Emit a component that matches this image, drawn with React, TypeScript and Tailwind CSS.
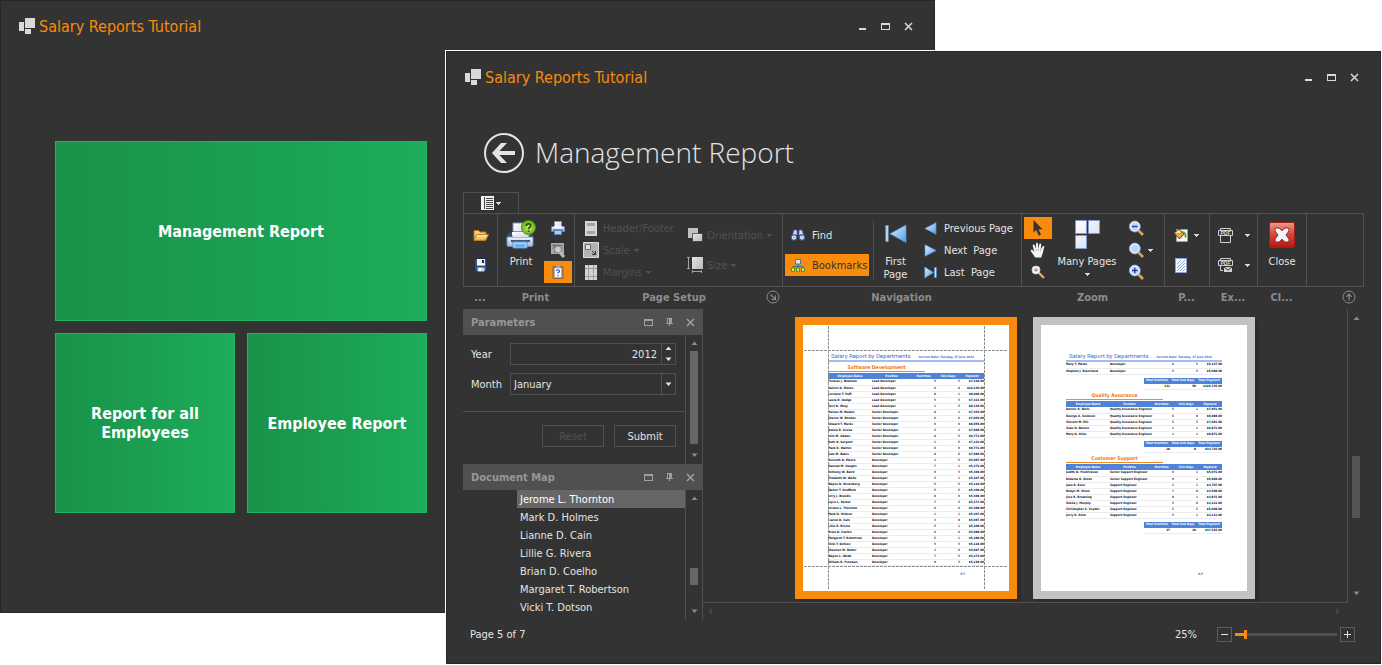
import type { ReactNode } from 'react';

/* ---------- small glyphs ---------- */

function Down({ className = 'fill-[#d8d8d8]' }: { className?: string }) {
  return (
    <svg width="5" height="3" viewBox="0 0 5 3" className={'shrink-0 ' + className} shapeRendering="crispEdges">
      <path d="M0 0h5v1H0zM1 1h3v1H1zM2 2h1v1H2z" />
    </svg>
  );
}

function Arrow({ dir, className }: { dir: 'up' | 'down' | 'left' | 'right'; className: string }) {
  const d = {
    up: 'M0.5 5L3.5 1.500L6.500 5Z',
    down: 'M0.5 1.500L3.5 5L6.500 1.500Z',
    left: 'M5 0L1 3.5L5 7Z',
    right: 'M1 0L5 3.5L1 7Z',
  }[dir];
  return (
    <svg width="7" height="7" viewBox="0 0 7 7" className={'shrink-0 ' + className}>
      <path d={d} />
    </svg>
  );
}

function AppLogo() {
  return (
    <svg width="16" height="16" viewBox="0 0 16 16" className="fill-[#d9d9d9]" shapeRendering="crispEdges">
      <path d="M0 4h5v9H0zM6 0h10v10H6zM6 11h6v5H6z" />
    </svg>
  );
}

/* ---------- ribbon icons ---------- */

function Gradients() {
  return (
    <svg width="0" height="0" className="absolute" aria-hidden="true">
      <defs>
        <linearGradient id="sky" x1="0" y1="0" x2="1" y2="1">
          <stop offset="0" stopColor="#e6f3fd" />
          <stop offset="1" stopColor="#4f9be0" />
        </linearGradient>
        <linearGradient id="paper" x1="0" y1="0" x2="1" y2="1">
          <stop offset="0" stopColor="#ffffff" />
          <stop offset="1" stopColor="#ccd9f0" />
        </linearGradient>
        <linearGradient id="body" x1="0" y1="0" x2="0" y2="1">
          <stop offset="0" stopColor="#f4f7fd" />
          <stop offset="1" stopColor="#9fb3dd" />
        </linearGradient>
        <linearGradient id="gold" x1="0" y1="0" x2="0" y2="1">
          <stop offset="0" stopColor="#fff0b8" />
          <stop offset="1" stopColor="#e7a33a" />
        </linearGradient>
        <linearGradient id="red" x1="0" y1="0" x2="0" y2="1">
          <stop offset="0" stopColor="#ee9a8b" />
          <stop offset="0.45" stopColor="#d9493c" />
          <stop offset="1" stopColor="#b5160f" />
        </linearGradient>
        <linearGradient id="grey" x1="0" y1="0" x2="1" y2="1">
          <stop offset="0" stopColor="#e6e6e6" />
          <stop offset="1" stopColor="#b8b8b8" />
        </linearGradient>
        <radialGradient id="green">
          <stop offset="0" stopColor="#c3ee5a" />
          <stop offset="1" stopColor="#6db51a" />
        </radialGradient>
      </defs>
    </svg>
  );
}

function FolderIcon() {
  return (
    <svg width="16" height="14" viewBox="0 0 16 14">
      <path d="M1 12V2.5h4.5L7 4h6v3" fill="#f6cf78" stroke="#b9711c" />
      <path d="M1 12.5L3.8 6.5H15.5L12.5 12.5Z" fill="url(#gold)" stroke="#c47b1e" />
    </svg>
  );
}

function SaveIcon() {
  return (
    <svg width="14" height="15" viewBox="0 0 14 15">
      <path d="M.5.5h12.500v13H2l-1.500-1.500z" fill="#3d5076" stroke="#1f2a44" />
      <path d="M3 1h8v6H3z" fill="url(#paper)" />
      <path d="M3.500 9.500h7v4h-7z" fill="#b9dcf7" />
      <path d="M3 5.500h8v2H3z" fill="#fff" />
      <path d="M8 2h2v3H8z" fill="#1f2a44" />
      <path d="M5 10h2v3H5z" fill="#fff" />
    </svg>
  );
}

function PrintLargeIcon() {
  return (
    <svg width="30" height="30" viewBox="0 0 30 30">
      <path d="M7 3h13v11H7z" fill="url(#paper)" stroke="#8297c4" />
      <path d="M4 12h20l3 3v4H1v-4z" fill="#3c4d70" stroke="#2b3857" />
      <path d="M1 17h26v8c0 1-1 1.500-2 1.500H3c-1 0-2-.5-2-1.500z" fill="url(#body)" stroke="#7488b8" />
      <path d="M6 12h17v3c0 1.500-1 2-2 2H8c-1 0-2-.5-2-2z" fill="url(#paper)" />
      <path d="M5 20h19v2H5z" fill="#46577d" />
      <path d="M7 22h14v6H7z" fill="#a9d8f8" stroke="#6a93c9" />
      <path d="M9 24h10v3H9z" fill="#5eb5ec" />
      <circle cx="22.500" cy="7.500" r="7" fill="url(#green)" stroke="#4e8c12" />
      <path d="M20.200 6c0-3 4.600-3 4.600-.4 0 1.800-2.200 1.800-2.200 3.400M22.600 10.500v1.500" fill="none" stroke="#2b430c" strokeWidth="1.600" />
    </svg>
  );
}

function PrintSmallIcon() {
  return (
    <svg width="14" height="14" viewBox="0 0 14 14">
      <path d="M3.500.5h7v6h-7z" fill="url(#paper)" stroke="#7e94c6" />
      <path d="M.5 5.500h13v5H.5z" fill="url(#body)" stroke="#6d82b6" />
      <path d="M3 5h8v2.500H3z" fill="#f4f8ff" />
      <path d="M2 8.500h10v1H2z" fill="#33446e" />
      <path d="M3.500 9.500h7v4h-7z" fill="#9ed0f6" stroke="#5c86c2" />
    </svg>
  );
}

function PageMagnifyIcon() {
  return (
    <svg width="14" height="15" viewBox="0 0 14 15">
      <path d="M0 0h13v11H0z" fill="#a9a9a9" />
      <path d="M1 2.500h11M1 5h11M3.500 1v9M7 1v3" stroke="#6b6b6b" />
      <circle cx="7" cy="6.500" r="3.500" fill="#c9c9c9" stroke="#8b8b8b" />
      <path d="M9 9.500l4 4.500" stroke="#bdbdbd" strokeWidth="3" />
    </svg>
  );
}

function ClipboardIcon() {
  return (
    <svg width="12" height="14" viewBox="0 0 12 14">
      <path d="M1 1.500h10v12H1z" fill="#b98e56" stroke="#8c6434" />
      <path d="M2.500 3h7v9.500h-7z" fill="#f5f8ff" stroke="#8fa3cb" strokeWidth=".6" />
      <path d="M4 0h4v3H4z" fill="#8fa6d4" />
      <path d="M4.500 6c0-1.700 3-1.700 3 0 0 1.200-1.500 1.200-1.500 2.500M6 10v1.300" fill="none" stroke="#2a57a4" strokeWidth="1.200" />
    </svg>
  );
}

function HeaderFooterIcon() {
  return (
    <svg width="12" height="15" viewBox="0 0 12 15">
      <path d="M0 0h12v15H0z" fill="#d6d6d6" />
      <path d="M2 2h8v3H2zM2 10h8v3H2z" fill="#a4a4a4" />
    </svg>
  );
}

function ScaleIcon() {
  return (
    <svg width="16" height="16" viewBox="0 0 16 16">
      <path d="M.5.500h15v15H.5z" fill="#b3b3b3" stroke="#dcdcdc" />
      <path d="M2.500 2.500h5v5h-5z" fill="#e0e0e0" stroke="#6d6d6d" />
      <path d="M9 9l3.500 3.500M12.500 9v3.500H9" stroke="#333" fill="none" />
    </svg>
  );
}

function MarginsIcon() {
  return (
    <svg width="12" height="15" viewBox="0 0 12 15">
      <path d="M0 0h12v15H0z" fill="#d4d4d4" />
      <path d="M3.500 0v15M8.500 0v15M0 3.500h12M0 11.500h12" stroke="#9c9c9c" />
    </svg>
  );
}

function OrientationIcon() {
  return (
    <svg width="15" height="14" viewBox="0 0 15 14">
      <path d="M0 0h10v10H0z" fill="#c2c2c2" />
      <path d="M4.500 5.500h10v8h-10z" fill="url(#grey)" stroke="#333" strokeWidth=".7" />
    </svg>
  );
}

function SizeIcon() {
  return (
    <svg width="16" height="16" viewBox="0 0 16 16">
      <path d="M5 0h11v12H5z" fill="url(#grey)" />
      <path d="M1.500 0v12M0 .5h3M0 11.500h3M5 14.500h10M5.500 13v3M14.500 13v3" stroke="#a4a4a4" fill="none" />
    </svg>
  );
}

function FindIcon() {
  return (
    <svg width="14" height="12" viewBox="0 0 14 12">
      <path d="M3 1h3v5H1.500zM8 1h3l1.500 5H8z" fill="#cfdcf8" stroke="#5266a4" strokeWidth=".8" />
      <path d="M6 4h2v2H6z" fill="#42568f" />
      <circle cx="3" cy="8.500" r="2.600" fill="#fff" stroke="#4960a5" strokeWidth="1.300" />
      <circle cx="11" cy="8.500" r="2.600" fill="#fff" stroke="#4960a5" strokeWidth="1.300" />
      <circle cx="3" cy="8.500" r="1" fill="#8ca5dd" />
      <circle cx="11" cy="8.500" r="1" fill="#8ca5dd" />
    </svg>
  );
}

function BookmarksIcon() {
  return (
    <svg width="14" height="13" viewBox="0 0 14 13">
      <path d="M7 5v5M2 10V7.500h10V10" fill="none" stroke="#4d6688" />
      <path d="M4.500.5h5v4.500h-5z" fill="#d3ecff" stroke="#3b78b8" />
      <path d="M.5 9h3v3.300h-3zM5.500 9h3v3.300h-3zM10.500 9h3v3.300h-3z" fill="#d9f08a" stroke="#5c8c14" />
    </svg>
  );
}

function FirstPageIcon() {
  return (
    <svg width="22" height="20" viewBox="0 0 22 20">
      <path d="M.8 1.500h2.400v16H.8z" fill="#cfe6f9" stroke="#5c9edb" strokeWidth=".8" />
      <path d="M21 1v17.500L5 9.800Z" fill="url(#sky)" stroke="#4d94d8" strokeWidth=".8" />
    </svg>
  );
}

function NavIcon({ kind }: { kind: 'prev' | 'next' | 'last' }) {
  return (
    <svg width="13" height="13" viewBox="0 0 13 13">
      {kind === 'prev' && <path d="M12 .7v11.600L.8 6.500Z" fill="url(#sky)" stroke="#4d94d8" strokeWidth=".7" />}
      {kind === 'next' && <path d="M1 .7v11.600L12.200 6.500Z" fill="url(#sky)" stroke="#4d94d8" strokeWidth=".7" />}
      {kind === 'last' && (
        <>
          <path d="M.8 1v11L9.500 6.500Z" fill="url(#sky)" stroke="#4d94d8" strokeWidth=".7" />
          <path d="M10.500 1.500h1.800v10h-1.800z" fill="#d8ebfb" stroke="#5c9edb" strokeWidth=".7" />
        </>
      )}
    </svg>
  );
}

function PointerIcon() {
  return (
    <svg width="10" height="17" viewBox="0 0 10 17" className="fill-[#333]">
      <path d="M.5 0v12.500L3.300 10l2.400 5.800 2.300-1L5.600 9.200H9.500Z" />
    </svg>
  );
}

function HandIcon() {
  return (
    <svg width="16" height="16" viewBox="0 0 16 16">
      <path
        d="M5 15.500C4 13 1 10 .7 8.800.4 7.600 2 7.300 2.800 8.300L4.300 10 2.800 4c-.3-1.500 1.500-2 2-.5L6 7 6 1.800c0-1.500 1.900-1.500 2 0L8.300 7l1-4.700c.3-1.400 2.100-1 1.900.4L10.700 7.500l1.800-3c.7-1.200 2.200-.4 1.700.8C13.500 7.500 13.300 9 12.800 11c-.3 1.500-1.200 2.500-1.400 4.500Z"
        fill="#f3f3f3"
      />
      <path d="M6.200 7v2M8.400 7v2M10.500 7.500v2" stroke="#aaa" strokeWidth=".7" />
    </svg>
  );
}

function LoupeIcon() {
  return (
    <svg width="14" height="14" viewBox="0 0 14 14">
      <path d="M8 8l5 5" stroke="#e8ab57" strokeWidth="2.400" />
      <circle cx="5" cy="5" r="4" fill="#eef4fb" stroke="#c7d3e6" />
      <circle cx="5" cy="5" r="1.200" fill="#fff" stroke="#c0392b" strokeWidth=".8" />
    </svg>
  );
}

function ZoomIcon({ sign }: { sign?: '+' | '-' }) {
  return (
    <svg width="16" height="16" viewBox="0 0 16 16">
      <path d="M10.500 10.500l4.500 4.500" stroke="#e3a04a" strokeWidth="2.600" />
      <circle cx="6.800" cy="6.500" r="5.500" fill="#bcd4f6" stroke="#6f92d4" strokeWidth="1" />
      <circle cx="6.800" cy="6.500" r="4.400" fill="none" stroke="#eaf2ff" strokeWidth="1.200" />
      {sign && <path d="M4 6.500h5.600" stroke="#1f3c86" strokeWidth="1.400" />}
      {sign === '+' && <path d="M6.800 3.700v5.600" stroke="#1f3c86" strokeWidth="1.400" />}
    </svg>
  );
}

function ManyPagesIcon() {
  return (
    <svg width="25" height="29" viewBox="0 0 25 29">
      <path d="M.5.5h11v13H.5zM13.500.5h11v13h-11zM.5 15.500h11v13H.5z" fill="url(#paper)" stroke="#8198cc" />
    </svg>
  );
}

function PageColorIcon() {
  return (
    <svg width="15" height="14" viewBox="0 0 15 14">
      <path d="M3.500 1.500h11v12h-11z" fill="#f3f7ff" stroke="#86a0d6" />
      <path d="M1 5l5-4 5 5-4.500 5z" fill="#e9a13d" stroke="#6f4412" />
      <path d="M2.500 5L6 2.200 8 4.500z" fill="#fff1c9" />
      <path d="M8 4.500c3-1 5 1 4.500 5" fill="none" stroke="#5ba21e" strokeWidth="1.800" />
    </svg>
  );
}

function WatermarkIcon() {
  return (
    <svg width="12" height="15" viewBox="0 0 12 15">
      <path d="M.5.5h11v14H.5z" fill="#f6f9ff" stroke="#8aa2d8" />
      <path d="M2 6l4-4M2 10l8-8M2 13l8-8M5 13l5-5M8 13l2-2" stroke="#8fa9e0" strokeWidth="1" />
    </svg>
  );
}

function PdfIcon({ mail }: { mail?: boolean }) {
  return (
    <svg width="15" height="15" viewBox="0 0 15 15">
      <path d="M2.500 3V.5h10V3" fill="none" stroke="#d0d0d0" />
      <path d="M.5 2.500h14v5H.5z" fill="#333" stroke="#d0d0d0" />
      <text x="7.500" y="7" textAnchor="middle" className="fill-[#d8d8d8] font-['Liberation_Sans'] text-[5px] font-bold">
        PDF
      </text>
      {mail ? (
        <>
          <path d="M2.500 8v4.500H5" fill="none" stroke="#d0d0d0" />
          <path d="M6 9h8v5H6z" fill="#d0d0d0" />
          <path d="M6 9l4 3 4-3" fill="none" stroke="#333" />
        </>
      ) : (
        <path d="M2.500 8v6.500h10V8" fill="none" stroke="#d0d0d0" />
      )}
    </svg>
  );
}

function CloseLargeIcon() {
  return (
    <svg width="26" height="26" viewBox="0 0 26 26">
      <rect x=".5" y=".5" width="25" height="25" rx="1.500" fill="url(#red)" stroke="#9c2018" />
      <path
        d="M6 9V7L7 6H10L13 8.700 16 6H19L20 7V9L17 13 20 17V19L19 20H16L13 17.300 10 20H7L6 19V17L9 13Z"
        fill="#f4f6fb"
        stroke="#8f2a26"
        strokeWidth="1"
      />
    </svg>
  );
}

/* ---------- windows ---------- */

function TitleBar() {
  return (
    <header className="flex h-[50px] shrink-0 items-center pr-3.5 pl-[18px]">
      <AppLogo />
      <h2 className="ml-1 flex-1 pt-0.5 font-['DejaVu_Sans_Condensed','Noto_Sans',sans-serif] text-base leading-5 text-[#f78b0b]">
        Salary Reports Tutorial
      </h2>
      <button aria-label="Minimize" className="flex h-5 w-[23px] items-center justify-center">
        <svg width="9" height="9" viewBox="0 0 9 9" shapeRendering="crispEdges" className="fill-[#d9d9d9]">
          <path d="M1 6h7v2H1z" />
        </svg>
      </button>
      <button aria-label="Maximize" className="flex h-5 w-[23px] items-center justify-center">
        <svg width="9" height="7" viewBox="0 0 9 7" shapeRendering="crispEdges" className="fill-[#d9d9d9]">
          <path d="M0 0h9v7H0zM1 2v4h7V2z" fillRule="evenodd" />
        </svg>
      </button>
      <button aria-label="Close window" className="flex h-5 w-[23px] items-center justify-center">
        <svg width="9" height="9" viewBox="0 0 9 9" className="stroke-[#d9d9d9]">
          <path d="M1 1l7 7M8 1l-7 7" strokeWidth="1.500" />
        </svg>
      </button>
    </header>
  );
}

function Tile({ children, wide }: { children: ReactNode; wide?: boolean }) {
  return (
    <button
      className={
        "flex h-[180px] items-center justify-center border border-[#22b562] bg-linear-to-r from-[#199248] to-[#1cac5a] px-3 text-center font-['DejaVu_Sans_Condensed','Noto_Sans',sans-serif] text-base leading-[19px] font-bold text-white " +
        (wide ? 'col-span-2' : '')
      }
    >
      {children}
    </button>
  );
}

function MenuWindow() {
  return (
    <section className="absolute top-0 right-[447px] bottom-[52px] left-0 border border-[#262626] bg-[#333]">
      <TitleBar />
      <div className="grid w-[426px] grid-cols-2 gap-3 pt-[90px] pl-[54px]">
        <Tile wide>Management Report</Tile>
        <Tile>Report for all Employees</Tile>
        <Tile>Employee Report</Tile>
      </div>
    </section>
  );
}

/* ---------- ribbon ---------- */

function Group({ caption, width, children, extra }: { caption: string; width: string; children?: ReactNode; extra?: ReactNode }) {
  return (
    <section className={'flex flex-col ' + width}>
      <div className="flex h-[74px] border-y border-l border-[#505050]">{children}</div>
      <div className="mb-0.5 flex h-5 items-center">
        <h3 className={'flex-1 text-center font-bold text-[#8c8c8c] ' + (extra ? 'pl-2' : '')}>{caption}</h3>
        {extra}
      </div>
    </section>
  );
}

function IconButton({ label, active, children }: { label: string; active?: boolean; children: ReactNode }) {
  return (
    <button
      aria-label={label}
      className={'flex h-[22px] w-7 items-center justify-center ' + (active ? 'bg-[#f98c0c]' : '')}
    >
      {children}
    </button>
  );
}

function RowButton({
  icon,
  label,
  menu,
  disabled,
  active,
}: {
  icon: ReactNode;
  label: string;
  menu?: boolean;
  disabled?: boolean;
  active?: boolean;
}) {
  return (
    <button
      disabled={disabled}
      className={
        'flex h-[22px] items-center pl-[5px] whitespace-pre ' +
        (disabled ? 'gap-1 text-[#515151]' : active ? 'gap-1.5 bg-[#f98c0c] text-[#333]' : 'gap-1.5 text-[#e4e4e4]')
      }
    >
      <span className="flex w-4 justify-center">{icon}</span>
      {label}
      {menu && <Down className={disabled ? 'fill-[#515151]' : 'fill-[#d8d8d8]'} />}
    </button>
  );
}

function Ribbon() {
  return (
    <div>
      <button
        aria-label="File menu"
        className="flex h-[21px] w-14 items-center justify-center gap-0.5 border border-b-0 border-[#505050]"
      >
        <svg width="13" height="14" viewBox="0 0 13 14" shapeRendering="crispEdges">
          <path d="M0 0h13v14H0z" fill="#f2f2f2" />
          <path d="M3 1h1v12H3zM5 2h7v1H5zM5 4h7v1H5zM5 6h7v1H5zM5 8h7v1H5zM5 10h7v1H5zM5 12h7v1H5z" fill="#444" />
        </svg>
        <Down />
      </button>
      <div className="flex">
        <Group caption="..." width="w-[34px]">
          <div className="flex flex-1 flex-col items-center justify-center gap-2">
            <IconButton label="Open"><FolderIcon /></IconButton>
            <IconButton label="Save"><SaveIcon /></IconButton>
          </div>
        </Group>
        <Group caption="Print" width="w-[77px]">
          <button className="flex flex-1 flex-col items-center pt-1.5 text-[#e4e4e4]">
            <PrintLargeIcon />
            <span className="mt-1">Print</span>
          </button>
          <div className="flex flex-col pt-[3px] pr-0.5">
            <IconButton label="Quick print"><PrintSmallIcon /></IconButton>
            <IconButton label="Page options"><PageMagnifyIcon /></IconButton>
            <IconButton label="Parameters" active><ClipboardIcon /></IconButton>
          </div>
        </Group>
        <Group
          caption="Page Setup"
          width="w-[208px]"
          extra={
            <button aria-label="Page setup options" className="mr-0.5">
              <svg width="14" height="14" viewBox="0 0 14 14" fill="none" className="stroke-[#8c8c8c]">
                <circle cx="7" cy="7" r="6" />
                <path d="M4.500 4.500l4.500 4.500M9.500 5.500v4h-4" strokeWidth="1.200" />
              </svg>
            </button>
          }
        >
          <div className="flex w-[105px] flex-col items-start pt-[3px] pl-[3px]">
            <RowButton disabled icon={<HeaderFooterIcon />} label="Header/Footer" />
            <RowButton disabled menu icon={<ScaleIcon />} label="Scale" />
            <RowButton disabled menu icon={<MarginsIcon />} label="Margins" />
          </div>
          <div className="flex flex-1 flex-col items-start gap-2 pt-2.5 pl-0.5">
            <RowButton disabled menu icon={<OrientationIcon />} label="Orientation" />
            <RowButton disabled menu icon={<SizeIcon />} label="Size" />
          </div>
        </Group>
        <Group caption="Navigation" width="w-[239px]">
          <div className="flex w-[86px] flex-col items-stretch gap-2 pt-2.5 pl-0.5">
            <RowButton icon={<FindIcon />} label="Find" />
            <RowButton active icon={<BookmarksIcon />} label="Bookmarks" />
          </div>
          <div className="mt-[7px] ml-1 h-[58px] border-l border-[#505050]" />
          <button className="flex w-[43px] flex-col items-center pt-2.5 leading-[13px] text-[#e4e4e4]">
            <FirstPageIcon />
            <span className="mt-[11px] w-8">First Page</span>
          </button>
          <div className="flex flex-col items-start pt-[3px]">
            <RowButton icon={<NavIcon kind="prev" />} label="Previous Page" />
            <RowButton icon={<NavIcon kind="next" />} label="Next  Page" />
            <RowButton icon={<NavIcon kind="last" />} label="Last  Page" />
          </div>
        </Group>
        <Group caption="Zoom" width="w-[143px]">
          <div className="flex flex-col pt-[3px] pl-0.5">
            <IconButton label="Pointer" active><PointerIcon /></IconButton>
            <IconButton label="Hand tool"><HandIcon /></IconButton>
            <IconButton label="Magnifier"><LoupeIcon /></IconButton>
          </div>
          <button className="flex flex-1 flex-col items-center pt-1.5 whitespace-nowrap text-[#e4e4e4]">
            <ManyPagesIcon />
            <span className="mt-[5px]">Many Pages</span>
            <Down className="mt-1 fill-[#d8d8d8]" />
          </button>
          <div className="flex w-[42px] flex-col pt-[3px]">
            <button aria-label="Zoom out" className="flex h-[22px] items-center pl-1.5"><ZoomIcon sign="-" /></button>
            <button aria-label="Zoom" className="flex h-[22px] items-center gap-1 pl-1.5"><ZoomIcon /><Down /></button>
            <button aria-label="Zoom in" className="flex h-[22px] items-center pl-1.5"><ZoomIcon sign="+" /></button>
          </div>
        </Group>
        <Group caption="P..." width="w-[45px]">
          <div className="flex flex-col gap-2 pt-2.5 pl-2">
            <button aria-label="Page color" className="flex h-[22px] items-center gap-1.5"><PageColorIcon /><Down /></button>
            <button aria-label="Watermark" className="flex h-[22px] items-center pl-0.5"><WatermarkIcon /></button>
          </div>
        </Group>
        <Group caption="Ex..." width="w-12">
          <div className="flex flex-col gap-2 pt-2.5 pl-2">
            <button aria-label="Export to PDF" className="flex h-[22px] items-center gap-3"><PdfIcon /><Down /></button>
            <button aria-label="E-mail as PDF" className="flex h-[22px] items-center gap-3"><PdfIcon mail /><Down /></button>
          </div>
        </Group>
        <Group caption="Cl..." width="w-[49px]">
          <button className="flex flex-1 flex-col items-center pt-2 text-[#e4e4e4]">
            <CloseLargeIcon />
            <span className="mt-1.5">Close</span>
          </button>
        </Group>
        <Group
          caption=""
          width="flex-1"
          extra={
            <button aria-label="Collapse ribbon" className="mr-[7px]">
              <svg width="14" height="14" viewBox="0 0 14 14" fill="none" className="stroke-[#8c8c8c]">
                <circle cx="7" cy="7" r="6" />
                <path d="M7 10.500v-6M4.300 6.800L7 4.100l2.700 2.700" strokeWidth="1.200" />
              </svg>
            </button>
          }
        />
        <div className="h-[74px] border-l border-[#505050]" />
      </div>
    </div>
  );
}

/* ---------- docked panels ---------- */

function PanelHeader({ title }: { title: string }) {
  return (
    <header className="flex h-[26px] shrink-0 items-center bg-[#505050] pr-px pl-2 text-[#979797]">
      <h3 className="flex-1 font-bold">{title}</h3>
      <button aria-label={'Maximize ' + title} className="flex w-[21px] justify-center">
        <svg width="9" height="7" viewBox="0 0 9 7" shapeRendering="crispEdges" className="fill-[#a0a0a0]">
          <path d="M0 0h9v7H0zM1 2v4h7V2z" fillRule="evenodd" />
        </svg>
      </button>
      <button aria-label={'Pin ' + title} className="flex w-[21px] justify-center">
        <svg width="7" height="8" viewBox="0 0 7 8" shapeRendering="crispEdges" className="fill-[#a0a0a0]">
          <path d="M1 0h5v5h1v1H4v2H3V6H0V5h1zM2 1v4h1V1z" fillRule="evenodd" />
        </svg>
      </button>
      <button aria-label={'Close ' + title} className="flex w-[21px] justify-center">
        <svg width="9" height="9" viewBox="0 0 9 9" className="stroke-[#a0a0a0]">
          <path d="M1 1l7 7M8 1l-7 7" strokeWidth="1.500" />
        </svg>
      </button>
    </header>
  );
}

function ScrollRail({ before, thumb }: { before: string; thumb: string }) {
  return (
    <div className="flex w-[17px] shrink-0 flex-col items-center border-l border-[#505050]">
      <Arrow dir="up" className="mt-[5px] fill-[#8a8a8a]" />
      <div className={before} />
      <div className={'w-2 bg-[#666] ' + thumb} />
      <div className="flex-1" />
      <Arrow dir="down" className="mb-[5px] fill-[#8a8a8a]" />
    </div>
  );
}

const PEOPLE = [
  'Jerome L. Thornton',
  'Mark D. Holmes',
  'Lianne D. Cain',
  'Lillie G. Rivera',
  'Brian D. Coelho',
  'Margaret T. Robertson',
  'Vicki T. Dotson',
];

function SidePanels() {
  return (
    <aside className="flex w-[240px] shrink-0 flex-col border-r border-[#505050]">
      <section className="flex h-[155px] shrink-0 flex-col">
        <PanelHeader title="Parameters" />
        <div className="flex min-h-0 flex-1">
          <form className="flex-1" onSubmit={(e) => e.preventDefault()}>
            <div className="grid grid-cols-[39px_1fr] gap-y-2 pt-2 pr-[9px] pb-4 pl-2 text-[#e4e4e4]">
              <label htmlFor="year" className="flex items-center">Year</label>
              <div className="flex h-[22px] border border-[#505050]">
                <input id="year" defaultValue="2012" className="w-0 flex-1 bg-transparent px-1 text-right outline-none" />
                <div className="flex w-3.5 flex-col items-center justify-center gap-1 border-l border-[#505050]">
                  <button type="button" aria-label="Next year"><Arrow dir="up" className="fill-[#e4e4e4]" /></button>
                  <button type="button" aria-label="Previous year"><Arrow dir="down" className="fill-[#e4e4e4]" /></button>
                </div>
              </div>
              <label htmlFor="month" className="flex items-center">Month</label>
              <div className="flex h-[22px] border border-[#505050]">
                <select id="month" defaultValue="January" className="w-0 flex-1 appearance-none bg-[#333] px-[3px] outline-none">
                  <option>January</option>
                  <option>February</option>
                  <option>March</option>
                </select>
                <span className="flex w-3.5 items-center justify-center border-l border-[#505050]">
                  <Arrow dir="down" className="fill-[#e4e4e4]" />
                </span>
              </div>
            </div>
            <div className="flex justify-end gap-2.5 border-t border-[#505050] pt-[13px] pr-[9px]">
              <button type="reset" disabled className="h-[22px] w-[62px] border border-[#505050] text-[#515151]">Reset</button>
              <button type="submit" className="h-[22px] w-[62px] border border-[#505050] text-[#e4e4e4]">Submit</button>
            </div>
          </form>
          <ScrollRail before="h-1" thumb="h-[93px]" />
        </div>
      </section>
      <section className="flex min-h-0 flex-1 flex-col">
        <PanelHeader title="Document Map" />
        <div className="flex min-h-0 flex-1">
          <ul className="flex-1 overflow-hidden pl-[54px] text-[#e4e4e4]">
            {PEOPLE.map((name, i) => (
              <li key={name} className={'h-[18px] pl-[3px] leading-5 ' + (i === 0 ? 'bg-[#666] text-white' : '')}>
                {name}
              </li>
            ))}
          </ul>
          <ScrollRail before="h-[66px]" thumb="h-[17px]" />
        </div>
      </section>
    </aside>
  );
}

/* ---------- report preview ---------- */

type Row = [string, string, string, string, string];

const SOFTWARE: Row[] = [
  ['Thomas J. Newman', 'Lead Developer', '5', '5', '$7,318.00'],
  ['Valerie D. Moran', 'Lead Developer', '6', '8', '$10,140.00'],
  ['Lorraine T. Huff', 'Lead Developer', '8', '1', '$8,008.00'],
  ['Laura R. Dodge', 'Lead Developer', '5', '5', '$7,313.00'],
  ['Terri D. Wray', 'Lead Developer', '1', '5', '$8,140.00'],
  ['Marian M. Walker', 'Senior Developer', '8', '1', '$7,403.00'],
  ['Sharon W. Rhodes', 'Senior Developer', '6', '6', '$7,003.00'],
  ['Edward T. Marks', 'Senior Developer', '6', '6', '$6,059.00'],
  ['Donna R. Acuna', 'Senior Developer', '5', '2', '$7,008.00'],
  ['Julio M. Adams', 'Senior Developer', '8', '5', '$6,771.00'],
  ['Ruth D. Sargent', 'Senior Developer', '1', '5', '$7,113.00'],
  ['Mark R. Walton', 'Senior Developer', '6', '6', '$6,771.00'],
  ['Sam M. Bates', 'Senior Developer', '8', '6', '$7,086.00'],
  ['Kenneth D. Moore', 'Developer', '4', '5', '$5,067.00'],
  ['Hannah M. Vaughn', 'Developer', '7', '1', '$5,273.00'],
  ['Anthony W. Baird', 'Developer', '6', '5', '$5,408.00'],
  ['Elizabeth W. Waite', 'Developer', '5', '1', '$5,207.00'],
  ['Wayne D. Rosenberg', 'Developer', '5', '5', '$5,110.00'],
  ['Walter T. Sheffield', 'Developer', '5', '5', '$5,408.00'],
  ['Jerry J. Brandis', 'Developer', '8', '6', '$5,308.00'],
  ['Joyce L. Parker', 'Developer', '7', '5', '$5,171.00'],
  ['Jerome L. Thornton', 'Developer', '6', '6', '$5,408.00'],
  ['Mark D. Holmes', 'Developer', '1', '1', '$5,207.00'],
  ['Lianne D. Cain', 'Developer', '4', '8', '$5,067.00'],
  ['Lillie G. Rivera', 'Developer', '5', '1', '$5,208.00'],
  ['Brian D. Coelho', 'Developer', '6', '6', '$5,088.00'],
  ['Margaret T. Robertson', 'Developer', '5', '1', '$5,168.00'],
  ['Vicki T. Dotson', 'Developer', '5', '5', '$5,118.00'],
  ['Shannon M. Butler', 'Developer', '4', '6', '$5,067.00'],
  ['Wayne L. Webb', 'Developer', '7', '5', '$5,273.00'],
  ['William R. Freeman', 'Developer', '8', '5', '$5,138.00'],
];

const REST: Row[] = [
  ['Mary T. Marks', 'Developer', '6', '5', '$5,147.00'],
  ['Stephen J. Blanchard', 'Developer', '5', '5', '$5,098.00'],
];

const QUALITY: Row[] = [
  ['Dennis R. Wells', 'Quality Assurance Engineer', '5', '1', '$7,051.00'],
  ['George A. Solomon', 'Quality Assurance Engineer', '6', '8', '$6,088.00'],
  ['Vincent M. Hill', 'Quality Assurance Engineer', '5', '5', '$7,001.00'],
  ['Sean D. Barnes', 'Quality Assurance Engineer', '4', '1', '$6,871.00'],
  ['Mary D. Allen', 'Quality Assurance Engineer', '1', '1', '$6,871.00'],
];

const SUPPORT: Row[] = [
  ['Judith D. Fredrickson', 'Senior Support Engineer', '6', '1', '$5,071.00'],
  ['Roberta G. Dixon', 'Senior Support Engineer', '8', '1', '$5,008.00'],
  ['Jean R. Rose', 'Support Engineer', '4', '1', '$4,707.00'],
  ['Robyn M. Olsen', 'Support Engineer', '7', '8', '$4,508.00'],
  ['Jose R. Browning', 'Support Engineer', '8', '1', '$4,871.00'],
  ['Sheila J. Murphy', 'Support Engineer', '5', '8', '$4,111.00'],
  ['Christopher S. Snyder', 'Support Engineer', '5', '5', '$5,008.00'],
  ['Jerry R. Allen', 'Support Engineer', '5', '1', '$4,111.00'],
];

function Columns() {
  return (
    <colgroup>
      <col className="w-11" />
      <col className="w-[39px]" />
      <col className="w-[25px]" />
      <col className="w-6" />
      <col className="w-6" />
    </colgroup>
  );
}

function StaffTable({ rows, head }: { rows: Row[]; head?: boolean }) {
  return (
    <table className="w-full table-fixed border-collapse text-[3px] leading-[5px] whitespace-nowrap text-[#04102c]">
      <Columns />
      {head && (
        <thead>
          <tr className="h-1.5 bg-[#5083d7] text-white">
            {['Employee Name', 'Position', 'Overtime', 'Sick Days', 'Payment'].map((h) => (
              <th key={h} className="p-0 text-center font-bold">{h}</th>
            ))}
          </tr>
        </thead>
      )}
      <tbody>
        {rows.map((r) => (
          <tr key={r[0]} className="h-1.5 border-b border-[#ececec]">
            <td className="p-0 font-bold">{r[0]}</td>
            <td className="p-0 font-bold">{r[1]}</td>
            <td className="p-0 text-right font-bold text-[#23509f]">{r[2]}</td>
            <td className="p-0 text-right font-bold text-[#23509f]">{r[3]}</td>
            <td className="p-0 text-right font-bold">{r[4]}</td>
          </tr>
        ))}
      </tbody>
    </table>
  );
}

function Totals({ values }: { values: [string, string, string] }) {
  return (
    <table className="mt-[3px] ml-auto w-[78px] table-fixed border-collapse text-[3px] leading-[5px] whitespace-nowrap">
      <thead>
        <tr className="h-1.5 bg-[#5083d7] text-white">
          {['Total Overtime', 'Total Sick Days', 'Total Payment'].map((h) => (
            <th key={h} className="p-0 text-center font-bold">{h}</th>
          ))}
        </tr>
      </thead>
      <tbody>
        <tr className="h-1.5 border-b border-[#ececec] text-[#04102c]">
          {values.map((v, i) => (
            <td key={i} className="p-0 text-right font-bold">{v}</td>
          ))}
        </tr>
      </tbody>
    </table>
  );
}

function ReportTitle() {
  return (
    <div className="flex h-3 items-end justify-between border-b-2 border-[#a3bdea] pr-2.5 pl-[3px] whitespace-nowrap text-[#3f74cf]">
      <h4 className="font-[Roboto,sans-serif] text-[6px] leading-[9px]">Salary Report by Departments</h4>
      <span className="text-[3px] leading-[5px] font-bold">Current Date: Tuesday, 27 June 2012</span>
    </div>
  );
}

function Department({ name }: { name: string }) {
  return (
    <h5 className="mb-px h-[10px] w-[97px] border-b border-[#f58a1f] text-center text-[5px] leading-[10px] font-bold whitespace-nowrap text-[#f07a10]">
      {name}
    </h5>
  );
}

function Sheet({ children, active }: { children: ReactNode; active?: boolean }) {
  return (
    <article
      className={
        'relative h-[282px] w-[222px] shrink-0 border-8 bg-white pt-[25px] pr-[25px] pl-[25px] shadow-[4px_4px_0_#2d2d2d] ' +
        (active ? 'border-[#f98c0c]' : 'border-[#c3c3c3]')
      }
    >
      {active && (
        <svg viewBox="0 0 206 266" className="absolute inset-0 h-full w-full" aria-hidden="true">
          <path d="M25.500 1v264M181.500 1v264M1 25.500h204M1 241.500h204" stroke="#8f8f8f" strokeDasharray="3 1" fill="none" />
        </svg>
      )}
      {children}
      <span className="absolute right-[44px] bottom-[14px] text-[3px] leading-[6px] font-bold text-[#3f66ad]">{active ? '5/7' : '6/7'}</span>
    </article>
  );
}

function Preview() {
  return (
    <main className="flex min-w-0 flex-1 flex-col">
      <div className="flex min-h-0 flex-1">
        <div className="flex min-w-0 flex-1 justify-center gap-4 overflow-hidden border-r border-b border-[#505050] pt-2">
          <Sheet active>
            <ReportTitle />
            <Department name="Software Development" />
            <StaffTable head rows={SOFTWARE} />
          </Sheet>
          <Sheet>
            <ReportTitle />
            <StaffTable rows={REST} />
            <Totals values={['111', '50', '$220,725.00']} />
            <Department name="Quality Assurance" />
            <StaffTable head rows={QUALITY} />
            <Totals values={['18', '8', '$33,725.00']} />
            <Department name="Customer Support" />
            <StaffTable head rows={SUPPORT} />
            <Totals values={['37', '10', '$37,525.00']} />
          </Sheet>
        </div>
        <div className="flex w-4 shrink-0 flex-col items-center">
          <Arrow dir="up" className="mt-1.5 fill-[#8a8a8a]" />
          <div className="flex-1" />
          <div className="h-[62px] w-2 bg-[#555]" />
          <div className="h-[72px]" />
          <Arrow dir="down" className="mb-1.5 fill-[#8a8a8a]" />
        </div>
      </div>
      <div className="flex h-[17px] shrink-0 items-center justify-between pr-[22px] pl-1">
        <Arrow dir="left" className="fill-[#444]" />
        <Arrow dir="right" className="fill-[#444]" />
      </div>
    </main>
  );
}

function StatusBar() {
  return (
    <footer className="flex h-[43px] shrink-0 items-center pr-[25px] pb-3.5 pl-[23px] text-[#e4e4e4]">
      <span className="flex-1">Page 5 of 7</span>
      <label htmlFor="zoom" className="mr-5">25%</label>
      <button aria-label="Decrease zoom" className="flex h-[15px] w-[15px] items-center justify-center border border-[#5c5c5c]">
        <svg width="7" height="7" viewBox="0 0 7 7" shapeRendering="crispEdges" className="fill-[#e4e4e4]"><path d="M0 3h7v1H0z" /></svg>
      </button>
      <input
        id="zoom"
        type="range"
        min="0"
        max="100"
        defaultValue="9"
        className="mx-[3px] h-[9px] w-[102px] appearance-none bg-[linear-gradient(to_right,#f98c0c_10px,#505050_10px)] bg-[length:100%_3px] bg-center bg-no-repeat [&::-webkit-slider-thumb]:h-[9px] [&::-webkit-slider-thumb]:w-[3px] [&::-webkit-slider-thumb]:appearance-none [&::-webkit-slider-thumb]:bg-[#f98c0c]"
      />
      <button aria-label="Increase zoom" className="flex h-[15px] w-[15px] items-center justify-center border border-[#5c5c5c]">
        <svg width="7" height="7" viewBox="0 0 7 7" shapeRendering="crispEdges" className="fill-[#e4e4e4]"><path d="M0 3h7v1H0zM3 0h1v7H3z" /></svg>
      </button>
    </footer>
  );
}

function ReportWindow() {
  return (
    <section className="absolute top-[50px] right-px bottom-px left-[445px] flex border-t border-l border-white">
      <div className="flex min-w-0 flex-1 flex-col border border-[#262626] bg-[#333]">
        <TitleBar />
        <div className="flex shrink-0 items-center gap-[11px] pt-[31px] pb-[19px] pl-[37px]">
          <button aria-label="Back">
            <svg width="40" height="40" viewBox="0 0 40 40" fill="none" className="stroke-[#e3e3e3]">
              <circle cx="20" cy="20" r="19" strokeWidth="2" />
              <path d="M31 20H12" strokeWidth="4" />
              <path d="M17 10h6l-9.500 10L23 30h-6L8 20Z" strokeWidth="0" className="fill-[#e3e3e3]" />
            </svg>
          </button>
          <h1 className="pb-0.5 font-['Open_Sans','Noto_Sans',sans-serif] text-[28px] leading-[38px] font-light text-[#e3e3e3]">Management Report</h1>
        </div>
        <div className="flex min-h-0 flex-1 flex-col px-4">
          <Ribbon />
          <div className="flex min-h-0 flex-1">
            <SidePanels />
            <Preview />
          </div>
        </div>
        <StatusBar />
      </div>
    </section>
  );
}

export default function App() {
  return (
    <div className="relative h-screen min-h-[620px] min-w-[1200px] overflow-hidden bg-white font-['DejaVu_Sans_Condensed','Noto_Sans',sans-serif] text-[11px] leading-[15px]">
      <Gradients />
      <MenuWindow />
      <ReportWindow />
    </div>
  );
}
